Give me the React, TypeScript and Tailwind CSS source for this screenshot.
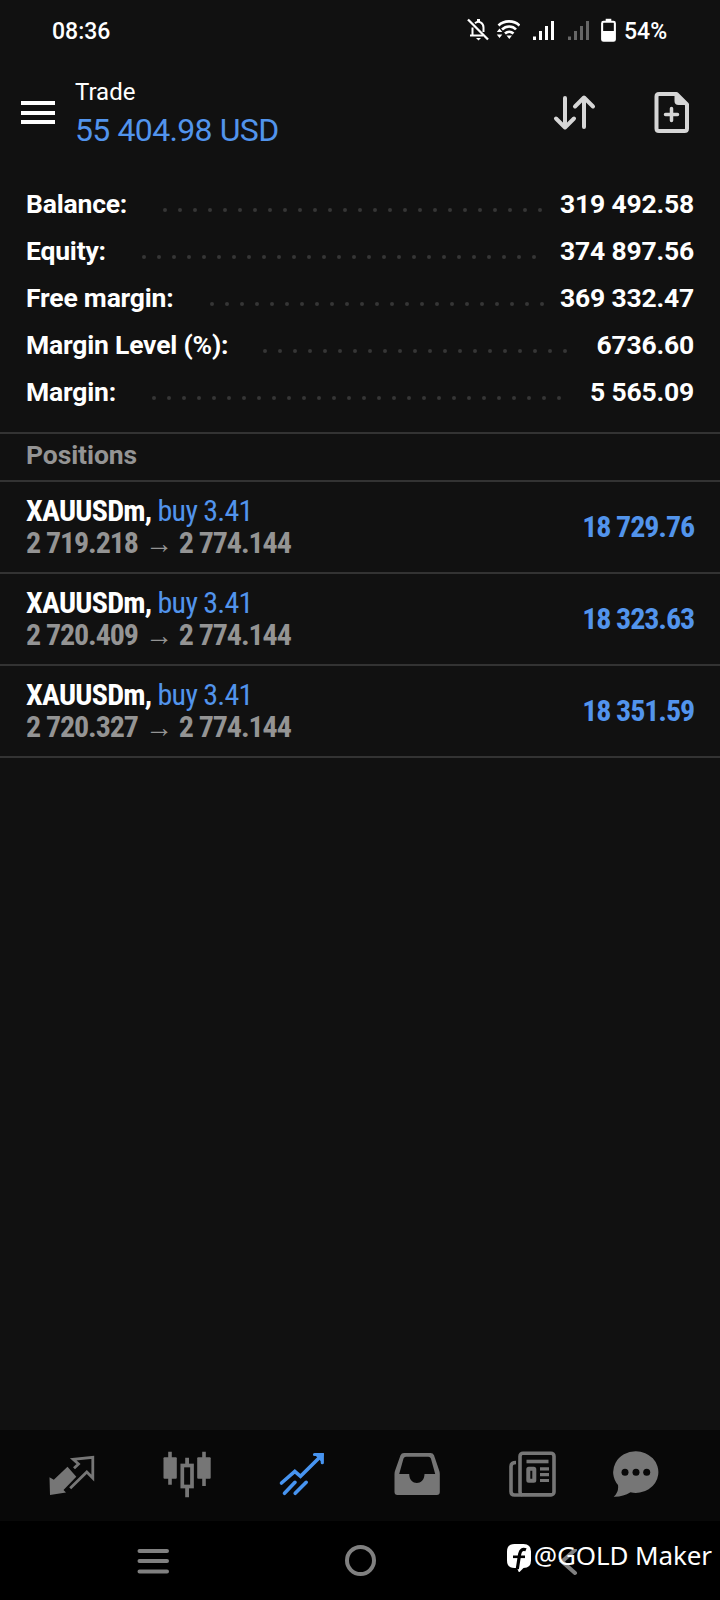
import React from 'react';

const summary = [
  { label: 'Balance:', value: '319 492.58', dots: 26, labelWidth: 'w-[137px]' },
  { label: 'Equity:', value: '374 897.56', dots: 27, labelWidth: 'w-[116px]' },
  { label: 'Free margin:', value: '369 332.47', dots: 23, labelWidth: 'w-[184px]' },
  { label: 'Margin Level (%):', value: '6736.60', dots: 21, labelWidth: 'w-[237px]' },
  { label: 'Margin:', value: '5 565.09', dots: 28, labelWidth: 'w-[126px]' },
];

const positions = [
  { symbol: 'XAUUSDm,', side: 'buy 3.41', open: '2 719.218', current: '2 774.144', profit: '18 729.76' },
  { symbol: 'XAUUSDm,', side: 'buy 3.41', open: '2 720.409', current: '2 774.144', profit: '18 323.63' },
  { symbol: 'XAUUSDm,', side: 'buy 3.41', open: '2 720.327', current: '2 774.144', profit: '18 351.59' },
];

const SignalBars = ({ className }: { className: string }) => (
  <svg viewBox="0 0 22 20" className={`h-5 w-[22px] ${className}`} fill="currentColor">
    <rect x="0" y="15.5" width="3" height="3.5" />
    <rect x="6" y="10" width="3" height="9" />
    <rect x="12" y="5" width="3" height="14" />
    <rect x="18" y="0" width="3" height="19" />
  </svg>
);

const StatusBar = () => (
  <div className="flex h-[60px] items-center pl-[52px] text-[23px] font-medium">
    <span className="w-[415px] pt-1">08:36</span>
    <svg viewBox="0 0 24 24" className="h-6 w-6" fill="none" stroke="currentColor" strokeWidth="2">
      <path d="M3 17.5h13M5.500 17V9.500M8 5.200C11.500 2 16.500 4.500 16.500 9.500V14" />
      <path d="M11.500 1v3" strokeWidth="3" />
      <path d="M1 1.500l20 20" strokeWidth="2.300" />
      <path d="M9 20h5l-2.500 2.500z" fill="currentColor" stroke="none" />
    </svg>
    <svg viewBox="0 0 24 24" className="ml-[5px] h-6 w-6" fill="none" stroke="currentColor" strokeWidth="2.600">
      <path d="M2.500 7.500C8 2 18 2 23.500 7.500M6 11.500c4-4 10.500-4 14 0M9 15.500c2.500-2.300 6-2.300 8.500 0" />
      <path d="M10.500 17.500h5.500l-2.700 3.500zM.8 14h5.500L3.500 10.500zM.8 16.500h5.500L3.500 20z" fill="currentColor" stroke="none" />
    </svg>
    <SignalBars className="ml-[13px] mt-px text-white" />
    <SignalBars className="ml-[13px] mt-px text-[#666]" />
    <svg viewBox="0 0 16 25" className="ml-[11px] h-[25px] w-[15px]" fill="none">
      <path d="M5 0h6v3H5z" fill="#fff" />
      <rect x="1.200" y="3.200" width="13.600" height="20.300" rx="1.500" stroke="#fff" strokeWidth="2.200" />
      <path d="M2 13h12v10H2z" fill="#fff" />
    </svg>
    <span className="ml-2 pt-1">54%</span>
  </div>
);

const Header = () => (
  <div className="flex h-[100px] pl-[21px]">
    <div className="mt-[41px] flex w-[34px] flex-col gap-[5.500px]">
      <div className="h-1 bg-white" />
      <div className="h-1 bg-white" />
      <div className="h-1 bg-white" />
    </div>
    <div className="ml-5 w-[475px] whitespace-nowrap pt-[17px]">
      <div className="text-[24px] leading-[30px]">Trade</div>
      <div className="text-[32px] leading-[46px] tracking-[-0.650px] text-[#5294ec] [word-spacing:0.500px]">55 404.98 USD</div>
    </div>
    <svg viewBox="0 0 46 40" className="mt-8 h-10 w-[46px]" fill="none" stroke="#d6d6d6" strokeWidth="4" strokeLinecap="round" strokeLinejoin="round">
      <path d="M15 6v29M6 26.500L15 35.500l9-9M34 35V6M25 14.500L34 5.500l9 9" />
    </svg>
    <svg viewBox="0 0 40 44" className="ml-[56px] mt-[30px] h-11 w-10" fill="none" stroke="#d6d6d6" strokeWidth="4">
      <path d="M7 4h17.500l10.500 10.500v24q0 2.500-2.500 2.500H7q-2.500 0-2.500-2.500V6.500q0-2.500 2.500-2.500z" strokeLinejoin="round" />
      <path d="M22.500 3v8q0 4 4 4h9.500z" fill="#d6d6d6" stroke="none" />
      <path d="M19.500 18.500v12M13.500 24.500h12" strokeLinecap="round" strokeWidth="3.500" />
    </svg>
  </div>
);

const tabIcons = [
  <>
    <path d="M1.500 27.300l4.300 2.500L19.500 16.800l8.800 10L15.500 40l2.500 2.500L2 45z" fill="currentColor" />
    <path d="M22.200 38.300L38.800 22l6 6V7.300L25.200 9.300l5.300 4.700-4.500 4.300" fill="none" stroke="currentColor" strokeWidth="2.800" />
  </>,
  <>
    <path d="M5.200 1.700h3.600v33H5.200zM22.200 7.700h3.800v7h-3.800zM22.200 37h3.800v10.300h-3.800zM39.200 1.700h3.600V36h-3.600z" fill="currentColor" />
    <rect x="0.500" y="7.300" width="13.300" height="21.500" rx="1" fill="currentColor" />
    <rect x="34.200" y="7.300" width="13.500" height="21.500" rx="1" fill="currentColor" />
    <rect x="19.300" y="15.500" width="9.700" height="21" fill="none" stroke="currentColor" strokeWidth="3.700" />
  </>,
  <g fill="none" stroke="currentColor" strokeWidth="3.600" strokeLinecap="round">
    <path d="M3.500 33L16.800 21.300l5.700 5L44 5" />
    <path d="M36.500 4.500h7.800v8.200" fill="currentColor" strokeWidth="3.200" />
    <path d="M6.500 43.300l10.500-11M17.200 43.300l11-11" />
  </g>,
  <path
    fill="currentColor"
    fillRule="evenodd"
    d="M11 3h26.500q2.500 0 3.500 2.200L46 20q.8 2 .8 4v18q0 3-3 3h-39.300q-3 0-3-3V24q0-2 .8-4L7.500 5.200Q8.500 3 11 3zM13 6.700q-1.800 0-2.500 1.800L6.200 24h10c0 12 15.300 12 15.300 0h10.700L37.900 8.500q-.7-1.800-2.500-1.800z"
  />,
  <g fill="none" stroke="currentColor" strokeWidth="3.600">
    <rect x="12" y="3.200" width="34" height="41.700" rx="3" />
    <path d="M8 12.500q-5 0-5 4v25q0 3.500 3.500 3.500H14.500" />
    <path d="M18.500 11.500h22" />
    <rect x="20.300" y="18.800" width="6" height="12" rx="0.500" strokeWidth="4" />
    <path d="M32 18.800h9M32 24.600h9M32 30.500h9" strokeWidth="3.200" />
  </g>,
  <>
    <path d="M24 1.300a22.500 20.800 0 1 1-5.500 41Q11 47 1.700 46.700 7 42 6 35A22.500 20.800 0 0 1 24 1.300z" fill="currentColor" />
    <g fill="#080808">
      <circle cx="13" cy="22.300" r="3.500" />
      <circle cx="24" cy="22.300" r="3.500" />
      <circle cx="34.700" cy="22.300" r="3.500" />
    </g>
  </>,
];

const App: React.FC = () => {
  return (
    <div className="flex h-[1600px] w-[720px] flex-col overflow-hidden bg-[#111] font-['Roboto',sans-serif] text-white">
      <StatusBar />
      <Header />

      <div className="h-[272px] pt-5">
        {summary.map((row) => (
          <div key={row.label} className="flex h-[47px] items-center whitespace-nowrap px-[26px] text-[26.500px] font-bold tracking-[-0.200px]">
            <span className={row.labelWidth}>{row.label}</span>
            <div className="flex gap-[11px] pt-3">
              {Array.from({ length: row.dots }, (_, i) => (
                <span key={i} className="size-1 rounded-full bg-[#363636]" />
              ))}
            </div>
            <span className="ml-auto">{row.value}</span>
          </div>
        ))}
      </div>

      <div className="flex h-[50px] items-center border-y-2 border-[#333] pb-1 pl-[26px] text-[26.500px] font-bold tracking-[-0.100px] text-[#949494]">
        Positions
      </div>

      {positions.map((p) => (
        <div key={p.open} className="flex h-[92px] items-center justify-between whitespace-nowrap border-b-2 border-[#333] px-[26px] text-[30px] [font-stretch:75%]">
          <div className="leading-8">
            <div className="tracking-[-0.750px]">
              <span className="font-bold">{p.symbol}</span> <span className="text-[#5294ec]">{p.side}</span>
            </div>
            <div className="flex h-8 font-bold tracking-[-1.100px] text-[#949494]">
              <span>{p.open}</span>
              <span className="w-[41px] pt-px text-center text-[28px]">→</span>
              <span>{p.current}</span>
            </div>
          </div>
          <span className="pb-0.5 font-bold tracking-[-1.100px] text-[#5294ec]">{p.profit}</span>
        </div>
      ))}

      <div className="mt-auto flex h-[91px] bg-[#080808] pl-3.5 pt-5">
        {tabIcons.map((icon, i) => (
          <div
            key={i}
            className={`flex justify-center ${i === 5 ? 'w-[94px]' : 'w-[115px]'} ${i === 2 ? 'text-[#4794f0]' : 'text-[#767676]'}`}
          >
            <svg viewBox="0 0 48 48" className="size-12">{icon}</svg>
          </div>
        ))}
      </div>

      <div className="relative flex h-[79px] bg-black pl-[137px] pt-7 text-[#808080]">
        <svg viewBox="0 0 32 25" className="h-[25px] w-8" fill="none" stroke="currentColor" strokeWidth="4" strokeLinecap="round">
          <path d="M2.500 2h27.500M2.500 12h27.500M2.500 22.500h27.500" />
        </svg>
        <div className="ml-[176px] mt-[-4px] size-[31px] rounded-full border-4 border-current" />
        <svg viewBox="0 0 20 28" className="ml-[182px] h-7 w-5" fill="none" stroke="currentColor" strokeWidth="4" strokeLinecap="round">
          <path d="M17 1L4 12.500 17 24" />
        </svg>
        <div className="absolute right-2 top-4 flex whitespace-nowrap text-white">
          <svg viewBox="0 0 24 28" className="mt-[7px] h-7 w-6">
            <path d="M7.500 0h9q7.500 0 7.500 7.500v9q0 7.500-7.500 7.500l-4.500 4.500-2-4.500H7.500Q0 24 0 16.500v-9Q0 0 7.500 0z" fill="#fff" />
            <path d="M19 5.800q-5-2-6.300 4L10.300 25" fill="none" stroke="#000" strokeWidth="3.200" />
            <path d="M6 12.800h12" fill="none" stroke="#000" strokeWidth="2.600" />
          </svg>
          <span className="ml-[3px] font-['Noto_Sans',sans-serif] text-[26px] leading-9 tracking-[-0.100px]">@GOLD Maker</span>
        </div>
      </div>
    </div>
  );
};

export default App;
